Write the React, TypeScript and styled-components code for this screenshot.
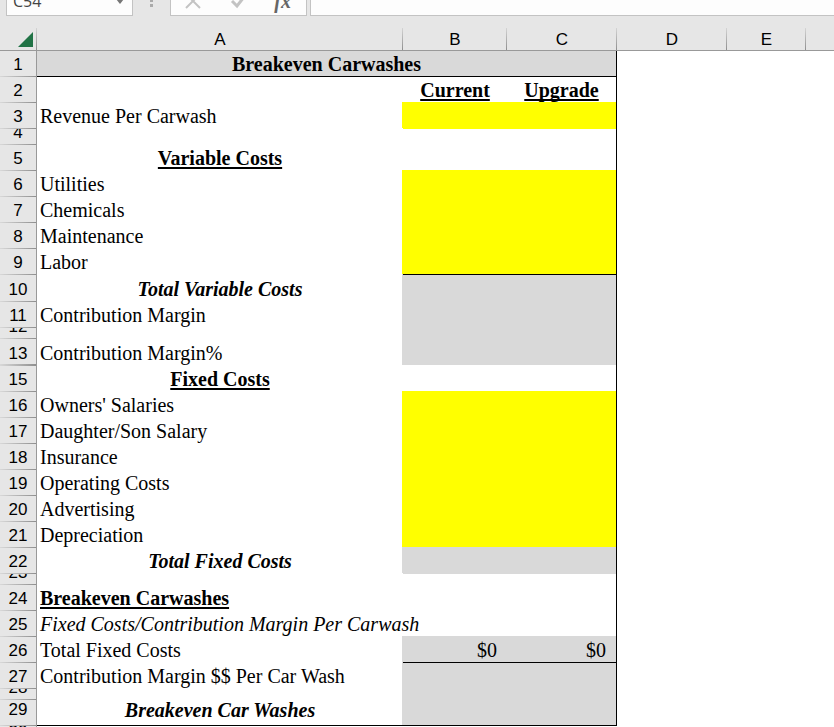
import React from "react";
import styled, { createGlobalStyle, css } from "styled-components";

const GlobalStyle = createGlobalStyle`
  * { box-sizing: border-box; }
  body { margin: 0; background: #fff; overflow: hidden; }
`;

const YELLOW = "#ffff00";
const GRAY = "#d9d9d9";
const WHITE = "#ffffff";
const CHROME = "#e6e6e6";
const LINE = "#999999";

const Workbook = styled.main`
  min-height: 100vh;
  overflow: hidden;
  background: #fff;
  color: #000;
`;

const FormulaBar = styled.header`
  display: flex;
  align-items: flex-end;
  height: 28px;
  padding: 0 0 12px 6px;
  background: ${CHROME};
`;

const BarBox = styled.div`
  display: flex;
  flex: none;
  align-items: center;
  height: 30px;
  background: #fdfdfd;
  border: 1px solid #c3c3c3;
`;

const NameBox = styled(BarBox)`
  width: 127px;
  padding: 0 8px 0 6px;
`;

const NameInput = styled.input`
  flex: 1;
  min-width: 0;
  height: 24px;
  padding: 0;
  border: 0;
  outline: 0;
  background: transparent;
  color: #444;
  font: 16px/24px "Open Sans", "Noto Sans", sans-serif;
`;

const IconButton = styled.button`
  display: flex;
  align-items: center;
  justify-content: center;
  padding: 0;
  border: 0;
  background: transparent;
  color: #666;
`;

const Grip = styled.div`
  display: flex;
  flex: none;
  justify-content: center;
  width: 37px;
  height: 26px;
`;

const Actions = styled(BarBox)`
  width: 137px;
  justify-content: space-between;
  margin-right: 3px;
  padding: 0 15px 0 14px;
`;

const FxButton = styled(IconButton)`
  font: italic bold 20px/24px "Liberation Serif", serif;
`;

const FormulaInput = styled.input`
  flex: 1;
  min-width: 0;
  height: 30px;
  border: 1px solid #c3c3c3;
  border-right: 0;
  outline: 0;
  background: #fdfdfd;
`;

const Sheet = styled.table`
  width: 100%;
  table-layout: fixed;
  border-spacing: 0;
  font: 20px/25px "Liberation Serif", "Times New Roman", serif;
`;

const Col = styled.col<{ $w?: number }>`
  width: ${(p) => (p.$w ? `${p.$w}px` : "auto")};
`;

const heading = css`
  padding: 0;
  background-color: ${CHROME};
  background-repeat: no-repeat;
  font: 17px/24px "Liberation Sans", Arial, sans-serif;
  text-align: center;
`;

const ColumnHead = styled.th`
  ${heading}
  height: 23px;
  padding-top: 2px;
  border-bottom: 1px solid ${LINE};
  background-image: linear-gradient(to bottom, #d4d4d4, #8f8f8f);
  background-size: 1px 100%;
  background-position: right top;
  line-height: 20px;

  &:last-child {
    background-image: none;
  }
`;

const Corner = styled(ColumnHead)`
  vertical-align: bottom;
`;

const SelectAll = styled.button`
  display: flex;
  justify-content: flex-end;
  width: 100%;
  padding: 0 4px 3px 0;
  border: 0;
  background: transparent;
`;

const RowHead = styled.th<{ $double?: boolean }>`
  ${heading}
  border-right: 1px solid ${LINE};
  background-image: linear-gradient(to right, #d8d8d8, #8f8f8f);
  background-size: 100% ${(p) => (p.$double ? 2 : 1)}px;
  background-position: left bottom;
`;

const RowNumber = styled.div<{ $h: number; $top?: boolean }>`
  display: flex;
  align-items: ${(p) => (p.$top ? "flex-start" : "flex-end")};
  justify-content: center;
  height: ${(p) => p.$h}px;
  overflow: hidden;
  ${(p) => p.$top && "line-height: 20px;"}
`;

type Look = "plain" | "section" | "total" | "heading" | "note" | "money" | "title";

const looks = {
  plain: css``,
  section: css`
    padding-left: 0;
    font-weight: bold;
    text-align: center;
    text-decoration: underline;
  `,
  total: css`
    padding-left: 0;
    font-weight: bold;
    font-style: italic;
    text-align: center;
  `,
  heading: css`
    font-weight: bold;
    text-decoration: underline;
  `,
  note: css`
    font-style: italic;
  `,
  money: css`
    padding-right: 10px;
    text-align: right;
  `,
  title: css`
    padding-left: 0;
    font-weight: bold;
    text-align: center;
  `,
};

interface CellProps {
  $look?: Look;
  $fill?: string;
  $ruled?: boolean;
  $edge?: boolean;
  $top?: boolean;
}

const cellShadow = (p: CellProps) =>
  [p.$ruled && "inset 0 -1px 0 #000", p.$fill && `-1px -1px 0 ${p.$fill}`]
    .filter(Boolean)
    .join(", ") || "none";

const Cell = styled.td<CellProps>`
  padding: 0 0 0 3px;
  vertical-align: bottom;
  white-space: nowrap;
  ${(p) => looks[p.$look ?? "plain"]}
  text-decoration-thickness: 2px;
  text-underline-offset: 2px;
  text-decoration-skip-ink: none;
  background: ${(p) => p.$fill ?? "transparent"};
  box-shadow: ${cellShadow};
  ${(p) => p.$edge && "border-right: 1px solid #000;"}
  ${(p) => p.$top && "vertical-align: top; line-height: 20px;"}
`;

const TitleCell = styled(Cell)`
  background: ${GRAY};
`;

const ValueCell = styled(Cell)`
  position: relative;
  ${(p) => p.$ruled && "z-index: 1;"}
`;

interface Row {
  n: number;
  label?: string;
  look?: Look;
  h?: number;
  fill?: string;
  values?: [string, string];
  valueLook?: Look;
  ruled?: boolean;
  last?: boolean;
  double?: boolean;
}

const rows: Row[] = [
  { n: 2, values: ["Current", "Upgrade"], valueLook: "section" },
  { n: 3, label: "Revenue Per Carwash", fill: YELLOW },
  { n: 4, h: 16 },
  { n: 5, label: "Variable Costs", look: "section" },
  { n: 6, label: "Utilities", fill: YELLOW },
  { n: 7, label: "Chemicals", fill: YELLOW },
  { n: 8, label: "Maintenance", fill: YELLOW },
  { n: 9, label: "Labor", fill: YELLOW, ruled: true },
  { n: 10, label: "Total Variable Costs", look: "total", h: 27, fill: GRAY },
  { n: 11, label: "Contribution Margin", fill: GRAY },
  { n: 12, h: 11, fill: GRAY },
  { n: 13, label: "Contribution Margin%", h: 27, fill: GRAY, double: true },
  { n: 15, label: "Fixed Costs", look: "section", fill: WHITE },
  { n: 16, label: "Owners' Salaries", fill: YELLOW },
  { n: 17, label: "Daughter/Son Salary", fill: YELLOW },
  { n: 18, label: "Insurance", fill: YELLOW },
  { n: 19, label: "Operating Costs", fill: YELLOW },
  { n: 20, label: "Advertising", fill: YELLOW },
  { n: 21, label: "Depreciation", fill: YELLOW },
  { n: 22, label: "Total Fixed Costs", look: "total", fill: GRAY },
  { n: 23, h: 11 },
  { n: 24, label: "Breakeven Carwashes", look: "heading" },
  { n: 25, label: "Fixed Costs/Contribution Margin Per Carwash", look: "note" },
  { n: 26, label: "Total Fixed Costs", fill: GRAY, values: ["$0", "$0"], valueLook: "money", ruled: true },
  { n: 27, label: "Contribution Margin $$ Per Car Wash", fill: GRAY },
  { n: 28, h: 11, fill: GRAY },
  { n: 29, label: "Breakeven Car Washes", look: "total", fill: GRAY, ruled: true, last: true },
];

const SheetRow = ({ row }: { row: Row }) => {
  const [b, c] = row.values ?? ["", ""];
  const value = { $look: row.valueLook, $fill: row.fill, $ruled: row.ruled };
  return (
    <tr>
      <RowHead scope="row" $double={row.double}>
        <RowNumber $h={row.h ?? 26} $top={row.last}>{row.n}</RowNumber>
      </RowHead>
      <Cell $look={row.look} $ruled={row.last} $top={row.last}>{row.label}</Cell>
      <ValueCell {...value}>{b}</ValueCell>
      <ValueCell {...value} $edge>{c}</ValueCell>
    </tr>
  );
};

export default function App() {
  return (
    <Workbook>
      <GlobalStyle />
      <FormulaBar>
        <NameBox>
          <NameInput aria-label="Name box" defaultValue="C54" />
          <IconButton aria-label="Open name list">
            <svg width="8" height="5" viewBox="0 0 8 5"><path d="M0 0h8L4 5z" fill="#777" /></svg>
          </IconButton>
        </NameBox>
        <Grip>
          <svg width="4" height="26" viewBox="0 0 4 26" fill="#aaa">
            <path d="M0 9h3v3H0zM0 14h3v3H0z" />
          </svg>
        </Grip>
        <Actions>
          <IconButton aria-label="Cancel">
            <svg width="16" height="16" viewBox="0 0 16 16" fill="none" stroke="#c3c3c3" strokeWidth="2">
              <path d="M1 1l14 14M15 1L1 15" />
            </svg>
          </IconButton>
          <IconButton aria-label="Enter">
            <svg width="16" height="16" viewBox="0 0 16 16" fill="none" stroke="#c3c3c3" strokeWidth="3">
              <path d="M2 8l5 5 7-9" />
            </svg>
          </IconButton>
          <FxButton aria-label="Insert function">fx</FxButton>
        </Actions>
        <FormulaInput aria-label="Formula" />
      </FormulaBar>
      <Sheet>
        <colgroup>
          <Col $w={37} />
          <Col $w={366} />
          <Col $w={104} />
          <Col $w={110} />
          <Col $w={110} />
          <Col $w={79} />
          <Col />
        </colgroup>
        <thead>
          <tr>
            <Corner>
              <SelectAll aria-label="Select all">
                <svg width="15" height="15" viewBox="0 0 15 15"><path d="M15 0v15H0z" fill="#217346" /></svg>
              </SelectAll>
            </Corner>
            {["A", "B", "C", "D", "E", ""].map((name) => (
              <ColumnHead key={name} scope="col">{name}</ColumnHead>
            ))}
          </tr>
        </thead>
        <tbody>
          <tr>
            <RowHead scope="row"><RowNumber $h={26}>1</RowNumber></RowHead>
            <TitleCell colSpan={3} $look="title" $ruled $edge>Breakeven Carwashes</TitleCell>
          </tr>
          {rows.map((row) => <SheetRow key={row.n} row={row} />)}
          <tr>
            <RowHead scope="row"><RowNumber $h={18}>30</RowNumber></RowHead>
          </tr>
        </tbody>
      </Sheet>
    </Workbook>
  );
}
